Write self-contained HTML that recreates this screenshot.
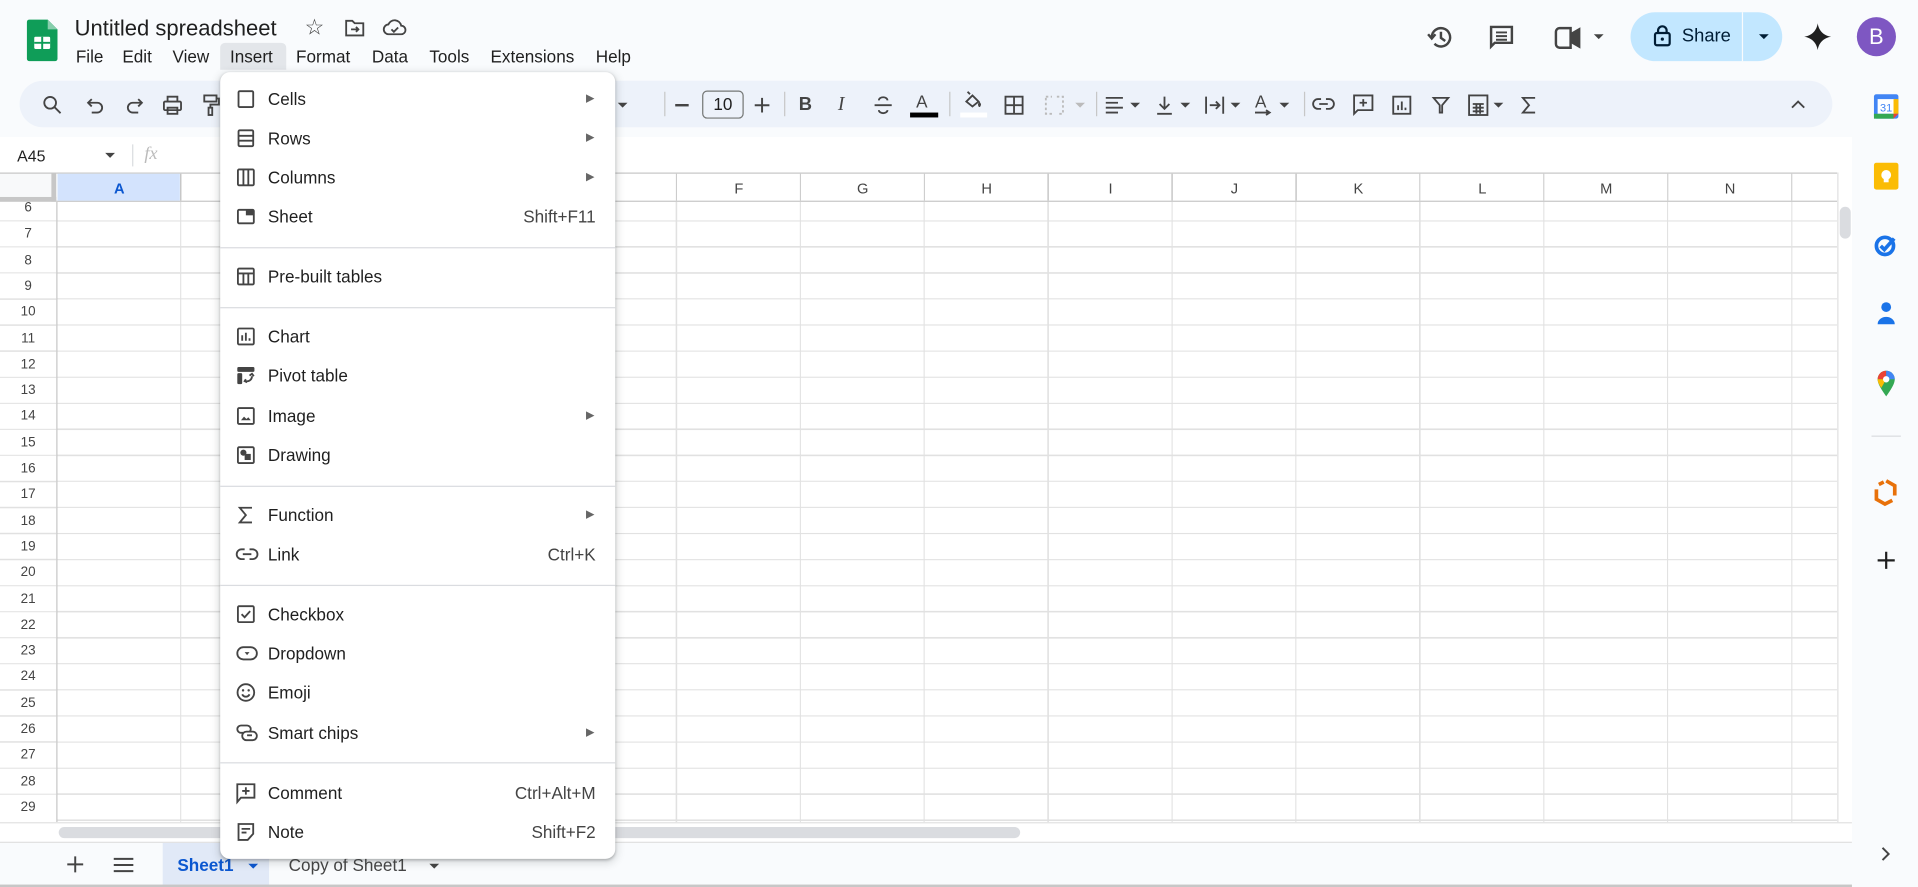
<!DOCTYPE html>
<html><head><meta charset="utf-8"><style>
*{box-sizing:border-box;margin:0;padding:0}
html,body{width:1918px;height:887px;overflow:hidden;background:#f9fbfd}
#w{position:absolute;left:0;top:0;width:1568px;height:725px;transform:scale(1.22321,1.22345);transform-origin:0 0;font-family:"Liberation Sans",Arial,sans-serif;color:#1f1f1f;background:#f9fbfd}
.a{position:absolute}
.t{position:absolute;white-space:nowrap}
svg{position:absolute;overflow:visible}
.mi{position:absolute;left:0;width:323px;height:32px}
.mi span.l{position:absolute;left:39px;top:8px;font-size:14px;color:#1f1f1f}
.mi span.r{position:absolute;right:16px;top:8px;font-size:14px;color:#444}
.mi span.ar{position:absolute;right:17px;top:10px;font-size:9px;color:#666}
.mi svg{left:13px;top:8px}
.sep{position:absolute;left:0;width:323px;height:1px;background:#dadce0}
.tb{stroke:#444;fill:none;stroke-width:1.5}
.car{position:absolute;width:0;height:0;border-left:4px solid transparent;border-right:4px solid transparent;border-top:4px solid #444}
.vs{position:absolute;width:1px;height:20px;background:#c7c7c7;top:75px}
</style></head><body><div id="w">

<svg style="left:22px;top:16px" width="25" height="34" viewBox="0 0 25 34"><path d="M2 0h15l8 8v24a2 2 0 0 1-2 2H2a2 2 0 0 1-2-2V2a2 2 0 0 1 2-2z" fill="#0f9d58"/><path d="M17 0v8h8z" fill="#87ceac"/><rect x="6" y="14" width="13" height="10" rx="1" fill="#fff"/><path d="M6 19h13M12.5 14v10" stroke="#0f9d58" stroke-width="1.6"/></svg>
<div class="t" style="left:61px;top:13px;font-size:18px;color:#1f1f1f">Untitled spreadsheet</div>
<div class="t" style="left:249px;top:12px;font-size:18px;color:#444">☆</div>
<svg style="left:282px;top:16px" width="16" height="14"><path d="M1 1h5l2 2h7v10H1z" class="tb"/><path d="M5 8h6M9 6l2 2-2 2" class="tb" stroke-width="1.3"/></svg>
<svg style="left:313px;top:15px" width="19" height="14"><path d="M5 13a4 4 0 0 1-.5-8A5.5 5.5 0 0 1 15 6a3.5 3.5 0 0 1 0 7z" class="tb"/><path d="M7 9l2 2 3.5-3.5" class="tb" stroke-width="1.3"/></svg>

<div class="a" style="left:180px;top:35px;width:54px;height:22px;background:#e3e6ea;border-radius:4px 4px 0 0"></div>
<div class="t" style="left:62px;top:38px;font-size:14px">File</div>
<div class="t" style="left:100px;top:38px;font-size:14px">Edit</div>
<div class="t" style="left:141px;top:38px;font-size:14px">View</div>
<div class="t" style="left:188px;top:38px;font-size:14px">Insert</div>
<div class="t" style="left:242px;top:38px;font-size:14px">Format</div>
<div class="t" style="left:304px;top:38px;font-size:14px">Data</div>
<div class="t" style="left:351px;top:38px;font-size:14px">Tools</div>
<div class="t" style="left:401px;top:38px;font-size:14px">Extensions</div>
<div class="t" style="left:487px;top:38px;font-size:14px">Help</div>

<svg style="left:1167px;top:20px" width="21" height="21"><path d="M3.5 10.5a7.5 7.5 0 1 1 2.2 5.3" stroke="#444" stroke-width="2" fill="none"/><path d="M0.5 8l3 3.5 3-3.5" stroke="#444" stroke-width="2" fill="none"/><path d="M11 6v5l3.5 2.5" stroke="#444" stroke-width="2" fill="none"/></svg>
<svg style="left:1217px;top:20px" width="21" height="21"><path d="M2 2h17v13H5l-3 3z" stroke="#444" stroke-width="2" fill="none"/><path d="M6 6.5h9M6 9.5h9M6 12.5h9" stroke="#444" stroke-width="1.6"/></svg>
<svg style="left:1270px;top:22px" width="26" height="18"><path d="M2 4a3 3 0 0 1 3-3h9v16H5a3 3 0 0 1-3-3z" stroke="#444" stroke-width="2" fill="none"/><path d="M14 6l7-4v14l-7-4" stroke="#444" stroke-width="2" fill="#444"/></svg>
<div class="car" style="left:1303px;top:28px"></div>
<div class="a" style="left:1333px;top:10px;width:124px;height:40px;border-radius:20px;background:#c2e7ff"></div>
<div class="a" style="left:1424px;top:10px;width:1px;height:40px;background:#f9fbfd"></div>
<svg style="left:1352px;top:20px" width="14" height="18"><rect x="1" y="7" width="12" height="10" rx="1.5" stroke="#001d35" stroke-width="1.8" fill="none"/><path d="M3.5 7V5a3.5 3.5 0 0 1 7 0v2" stroke="#001d35" stroke-width="1.8" fill="none"/><circle cx="7" cy="12" r="1.3" fill="#001d35"/></svg>
<div class="t" style="left:1375px;top:21px;font-size:15px;color:#001d35">Share</div>
<div class="car" style="left:1438px;top:28px;border-top-color:#001d35"></div>
<svg style="left:1475px;top:19px" width="22" height="22"><path d="M11 0C11.8 6 16 10.2 22 11 16 11.8 11.8 16 11 22 10.2 16 6 11.8 0 11 6 10.2 10.2 6 11 0z" fill="#1f1f1f"/></svg>
<div class="a" style="left:1518px;top:14px;width:32px;height:32px;border-radius:50%;background:#7e57c2;color:#fff;font-size:18px;text-align:center;line-height:32px">B</div>

<div class="a" style="left:16px;top:66px;width:1482px;height:38px;border-radius:19px;background:#edf2fa"></div>
<svg style="left:35px;top:78px" width="16" height="16"><circle cx="6" cy="6" r="4.8" class="tb" stroke-width="1.8"/><path d="M9.5 9.5l5 5" class="tb" stroke-width="1.8"/></svg>
<svg style="left:71px;top:79px" width="14" height="14"><path d="M1 5h7.5a4 4 0 0 1 0 8H4" class="tb"/><path d="M4 2L1 5l3 3" class="tb"/></svg>
<svg style="left:103px;top:79px" width="14" height="14"><path d="M13 5H5.5a4 4 0 0 0 0 8H10" class="tb"/><path d="M10 2l3 3-3 3" class="tb"/></svg>
<svg style="left:133px;top:78px" width="16" height="16"><rect x="1" y="5" width="14" height="7" rx="1" class="tb"/><path d="M4 5V1h8v4M4 10h8v5H4z" class="tb"/></svg>
<svg style="left:166px;top:77px" width="14" height="18"><rect x="1" y="1" width="10" height="5" class="tb"/><path d="M11 3.5h2v5H6v3" class="tb"/><rect x="4.5" y="11" width="3" height="6" class="tb"/></svg>
<div class="car" style="left:505px;top:84px"></div>
<div class="vs" style="left:543px"></div>
<div class="a" style="left:552px;top:85px;width:11px;height:1.6px;background:#444"></div>
<div class="a" style="left:574px;top:74px;width:34px;height:23px;border:1px solid #747775;border-radius:4px;font-size:14px;text-align:center;line-height:21px;color:#1f1f1f">10</div>
<svg style="left:617px;top:80px" width="12" height="12"><path d="M6 0v12M0 6h12" stroke="#444" stroke-width="1.6"/></svg>
<div class="vs" style="left:641px"></div>
<div class="t" style="left:653px;top:77px;font-size:15px;font-weight:bold;color:#444">B</div>
<div class="t" style="left:685px;top:77px;font-size:16px;font-style:italic;font-family:'Liberation Serif',serif;color:#444">I</div>
<svg style="left:714px;top:78px" width="16" height="16"><path d="M11.5 4a3.5 2.5 0 0 0-7 0M4.5 12a3.5 2.5 0 0 0 7 0M1 8h14" class="tb"/></svg>
<div class="t" style="left:749px;top:75px;font-size:14px;color:#444">A</div>
<div class="a" style="left:744px;top:92px;width:23px;height:4px;background:#000"></div>
<div class="vs" style="left:776px"></div>
<svg style="left:787px;top:74px" width="17" height="17"><path d="M3 9l5-5 5 5-5 4z" class="tb"/><path d="M6 3L4 1" class="tb"/><path d="M15 11c0 1.5-.8 2.5-1.3 2.5S12.5 12.5 12.5 11l1.2-2z" fill="#444"/></svg>
<div class="a" style="left:785px;top:92px;width:22px;height:4px;background:#fff"></div>
<svg style="left:821px;top:78px" width="16" height="16"><rect x="1" y="1" width="14" height="14" class="tb"/><path d="M8 1v14M1 8h14" class="tb"/></svg>
<svg style="left:854px;top:78px" width="16" height="16"><path d="M1 1h5M10 1h5v14h-5M6 15H1V1" stroke="#bbb" stroke-width="1.5" fill="none" stroke-dasharray="2 2"/></svg>
<div class="car" style="left:879px;top:84px;border-top-color:#bbb"></div>
<div class="vs" style="left:896px"></div>
<svg style="left:903px;top:79px" width="16" height="14"><path d="M1 1h14M1 5h10M1 9h14M1 13h10" class="tb"/></svg>
<div class="car" style="left:924px;top:84px"></div>
<svg style="left:945px;top:78px" width="14" height="16"><path d="M7 1v10M3 7l4 4 4-4M1 15h12" class="tb"/></svg>
<div class="car" style="left:965px;top:84px"></div>
<svg style="left:985px;top:78px" width="16" height="16"><path d="M1 1v14M15 1v14M4 8h8M9 5l3 3-3 3" class="tb"/></svg>
<div class="car" style="left:1006px;top:84px"></div>
<div class="t" style="left:1026px;top:75px;font-size:14px;color:#444">A</div>
<svg style="left:1025px;top:90px" width="16" height="6"><path d="M1 2h12M10 0l3 2-3 2" class="tb" stroke-width="1.3"/></svg>
<div class="car" style="left:1046px;top:84px"></div>
<div class="vs" style="left:1066px"></div>
<svg style="left:1073px;top:80px" width="18" height="10"><path d="M7 1H4.5a4 4 0 0 0 0 8H7M11 1h2.5a4 4 0 0 1 0 8H11M5.5 5h7" class="tb" stroke-width="1.8"/></svg>
<svg style="left:1106px;top:77px" width="17" height="18"><path d="M1 1h15v12H4l-3 3z" class="tb"/><path d="M8.5 4v6M5.5 7h6" class="tb"/></svg>
<svg style="left:1138px;top:78px" width="16" height="16"><rect x="1" y="1" width="14" height="14" class="tb"/><path d="M5 12V8M8 12V5M11 12v-2" class="tb"/></svg>
<svg style="left:1171px;top:79px" width="14" height="14"><path d="M1 1h12L8 7v6H6V7z" class="tb"/></svg>
<svg style="left:1200px;top:77px" width="17" height="18"><rect x="1" y="1" width="15" height="16" class="tb"/><path d="M4 8h9M4 11h9M4 14h9M7 8v8M10 8v8" class="tb" stroke-width="1.2"/></svg>
<div class="car" style="left:1221px;top:84px"></div>
<svg style="left:1244px;top:79px" width="12" height="14"><path d="M11 1H1l5 6-5 6h10" class="tb" stroke-width="1.8"/></svg>
<svg style="left:1464px;top:81px" width="12" height="8"><path d="M1 7l5-5 5 5" class="tb" stroke-width="1.8"/></svg>

<div class="a" style="left:0;top:112px;width:1514px;height:29px;background:#fff"></div>
<div class="t" style="left:14px;top:120px;font-size:13px;color:#1f1f1f">A45</div>
<div class="car" style="left:86px;top:125px"></div>
<div class="a" style="left:108px;top:118px;width:1px;height:18px;background:#dadce0"></div>
<div class="t" style="left:118px;top:118px;font-size:15px;font-style:italic;font-family:'Liberation Serif',serif;color:#bbb">fx</div>

<div class="a" style="left:0;top:141px;width:1502px;height:531px;background-color:#fff;background-image:repeating-linear-gradient(to right,transparent 0,transparent 100.3px,#e1e1e1 100.3px,#e1e1e1 101.3px),repeating-linear-gradient(to bottom,transparent 0,transparent 20.3px,#e1e1e1 20.3px,#e1e1e1 21.3px);background-position:47px 18.7px"></div>
<div class="a" style="left:0;top:141px;width:1502px;height:24px;background-color:#fff;border-top:1px solid #c7c7c7;border-bottom:1px solid #c7c7c7;background-image:repeating-linear-gradient(to right,transparent 0,transparent 100.3px,#c7c7c7 100.3px,#c7c7c7 101.3px);background-position:47px 0"></div>
<div class="a" style="left:47px;top:142px;width:100px;height:22px;background:#d3e3fd"></div>
<div class="a" style="left:0;top:141px;width:46px;height:24px;background:#f8f9fa;border-right:4px solid #c7c7c7;border-bottom:4px solid #c7c7c7;border-top:1px solid #c7c7c7"></div>
<div class="a" style="left:0;top:165px;width:47px;height:507px;background:#fff;border-right:1px solid #c7c7c7;background-image:repeating-linear-gradient(to bottom,transparent 0,transparent 20.3px,#e1e1e1 20.3px,#e1e1e1 21.3px);background-position:0 -5.3px"></div>
<div id="cols"></div>
<div class="a" style="left:1502px;top:141px;width:12px;height:547px;background:#fff;border-left:1px solid #e1e1e1"></div>
<div class="a" style="left:1504px;top:169px;width:9px;height:26px;border-radius:5px;background:#dadce0"></div>
<div class="a" style="left:0;top:672px;width:1514px;height:16px;background:#fff;border-top:1px solid #e1e1e1"></div>
<div class="a" style="left:48px;top:676px;width:786px;height:9px;border-radius:5px;background:#dadce0"></div>

<div class="a" style="left:0;top:688px;width:1514px;height:37px;background:#f9fbfd;border-top:1px solid #e1e1e1"></div>
<svg style="left:55px;top:700px" width="13" height="13"><path d="M6.5 0v13M0 6.5h13" stroke="#444" stroke-width="1.6"/></svg>
<svg style="left:93px;top:701px" width="16" height="12"><path d="M0 1h16M0 6h16M0 11h16" stroke="#444" stroke-width="1.6"/></svg>
<div class="a" style="left:133px;top:689px;width:87px;height:36px;background:#e1e9f7"></div>
<div class="t" style="left:145px;top:699px;font-size:14px;font-weight:bold;color:#0b57d0">Sheet1</div>
<div class="car" style="left:203px;top:706px;border-top-color:#0b57d0"></div>
<div class="t" style="left:236px;top:699px;font-size:14px;color:#444">Copy of Sheet1</div>
<div class="car" style="left:351px;top:706px"></div>
<div class="a" style="left:0;top:723px;width:1568px;height:2px;background:#c7c7c7"></div>

<div class="a" style="left:1514px;top:60px;width:54px;height:665px;background:#f9fbfd"></div>
<svg style="left:1532px;top:77px" width="20" height="20"><rect x="0" y="0" width="20" height="20" rx="2" fill="#4285f4"/><rect x="3" y="4" width="14" height="12" fill="#fff"/><rect x="0" y="16" width="16" height="4" fill="#34a853"/><rect x="16" y="4" width="4" height="12" fill="#fbbc04"/><path d="M16 16h4l-4 4z" fill="#ea4335"/><text x="10" y="14" font-size="9" text-anchor="middle" fill="#4285f4" font-family="Liberation Sans">31</text></svg>
<svg style="left:1532px;top:133px" width="20" height="22"><rect width="20" height="22" rx="2" fill="#fbbc04"/><circle cx="10" cy="10" r="4" fill="#fff"/><rect x="8" y="13" width="4" height="3" fill="#fff"/></svg>
<svg style="left:1532px;top:190px" width="20" height="20"><circle cx="9" cy="11" r="7" stroke="#1a73e8" stroke-width="3" fill="none"/><path d="M5.5 11l3 3 8-9" stroke="#1a73e8" stroke-width="3" fill="none"/></svg>
<svg style="left:1534px;top:246px" width="16" height="20"><circle cx="8" cy="5" r="4" fill="#1a73e8"/><path d="M1 19a7 6 0 0 1 14 0z" fill="#1a73e8"/></svg>
<svg style="left:1534px;top:302px" width="16" height="22"><path d="M8 22C3 15 1 11 1 8a7 7 0 0 1 14 0c0 3-2 7-7 14z" fill="#34a853"/><path d="M1 8a7 7 0 0 1 7-7l0 7z" fill="#ea4335"/><path d="M8 1a7 7 0 0 1 7 7H8z" fill="#4285f4"/><path d="M1 8h7l-4 7C2 12 1 10 1 8z" fill="#fbbc04"/><circle cx="8" cy="8" r="2.6" fill="#fff"/></svg>
<div class="a" style="left:1530px;top:356px;width:24px;height:1px;background:#dadce0"></div>
<svg style="left:1533px;top:392px" width="17" height="20"><path d="M9 1l7 4v8M14 17l-6 3-7-4V8M3 4l4-2" stroke="#e8710a" stroke-width="3" fill="none"/></svg>
<svg style="left:1535px;top:451px" width="14" height="14"><path d="M7 0v14M0 7h14" stroke="#1f1f1f" stroke-width="1.8"/></svg>
<svg style="left:1538px;top:692px" width="8" height="12"><path d="M1 1l5 5-5 5" stroke="#444" stroke-width="1.6" fill="none"/></svg>

<div class="a" style="left:180px;top:59px;width:323px;height:643px;background:#fff;border-radius:8px;box-shadow:0 2px 6px 2px rgba(60,64,67,.15),0 1px 2px rgba(60,64,67,.3)">
 <div class="mi" style="top:6px"><svg width="16" height="16"><rect x="2" y="1.5" width="12" height="13" rx="1" class="tb"/></svg><span class="l">Cells</span><span class="ar">▶</span></div>
 <div class="mi" style="top:38px"><svg width="16" height="16"><rect x="2" y="1.5" width="12" height="13" rx="1" class="tb"/><path d="M2 6h12M2 10h12" class="tb"/></svg><span class="l">Rows</span><span class="ar">▶</span></div>
 <div class="mi" style="top:70px"><svg width="16" height="16"><rect x="1.5" y="1.5" width="13" height="13" rx="1" class="tb"/><path d="M6 1.5v13M10 1.5v13" class="tb"/></svg><span class="l">Columns</span><span class="ar">▶</span></div>
 <div class="mi" style="top:102px"><svg width="16" height="16"><rect x="1.5" y="2.5" width="13" height="11" rx="1" class="tb"/><rect x="8" y="2.5" width="6.5" height="4.5" fill="#444"/></svg><span class="l">Sheet</span><span class="r">Shift+F11</span></div>
 <div class="sep" style="top:143px"></div>
 <div class="mi" style="top:151px"><svg width="16" height="16"><rect x="1.5" y="1.5" width="13" height="13" rx="1" class="tb"/><path d="M1.5 5.5h13M6 5.5v9M10 5.5v9" class="tb"/></svg><span class="l">Pre-built tables</span></div>
 <div class="sep" style="top:192px"></div>
 <div class="mi" style="top:200px"><svg width="16" height="16"><rect x="1.5" y="1.5" width="13" height="13" rx="1" class="tb"/><path d="M5 11.5V7M8 11.5V5M11 11.5v-2" class="tb"/></svg><span class="l">Chart</span></div>
 <div class="mi" style="top:232px"><svg width="16" height="16"><rect x="1" y="1" width="14" height="4" rx="1" fill="#444"/><rect x="1" y="6" width="4" height="9" rx="1" fill="#444"/><path d="M8 12.5a4 4 0 0 0 5-4M11 8l2-1.5 1.5 2M8 11l-1 1.5 2 1" class="tb" stroke-width="1.3"/></svg><span class="l">Pivot table</span></div>
 <div class="mi" style="top:265px"><svg width="16" height="16"><rect x="1.5" y="1.5" width="13" height="13" rx="1" class="tb"/><path d="M4 11.5l2.5-3 2 2 1.5-1.5 2 2.5z" fill="#444"/></svg><span class="l">Image</span><span class="ar">▶</span></div>
 <div class="mi" style="top:297px"><svg width="16" height="16"><rect x="1.5" y="1.5" width="13" height="13" rx="1" class="tb"/><circle cx="6" cy="6" r="2.5" fill="#444"/><rect x="7" y="7" width="5" height="5" fill="#444"/></svg><span class="l">Drawing</span></div>
 <div class="sep" style="top:338px"></div>
 <div class="mi" style="top:346px"><svg width="16" height="16"><path d="M13 2H3l5 6-5 6h10" class="tb" stroke-width="1.8"/></svg><span class="l">Function</span><span class="ar">▶</span></div>
 <div class="mi" style="top:378px"><svg width="18" height="16"><path d="M7 4H4.5a4 4 0 0 0 0 8H7M11 4h2.5a4 4 0 0 1 0 8H11M5.5 8h7" class="tb" stroke-width="1.6"/></svg><span class="l">Link</span><span class="r">Ctrl+K</span></div>
 <div class="sep" style="top:419px"></div>
 <div class="mi" style="top:427px"><svg width="16" height="16"><rect x="1.5" y="1.5" width="13" height="13" rx="1" class="tb"/><path d="M4.5 8l2.5 2.5 4.5-5" class="tb"/></svg><span class="l">Checkbox</span></div>
 <div class="mi" style="top:459px"><svg width="18" height="16"><rect x="1" y="3" width="16" height="10" rx="5" class="tb"/><path d="M7 7h4l-2 2.5z" fill="#444"/></svg><span class="l">Dropdown</span></div>
 <div class="mi" style="top:491px"><svg width="16" height="16"><circle cx="8" cy="8" r="6.8" class="tb"/><circle cx="5.7" cy="6.3" r="1" fill="#444"/><circle cx="10.3" cy="6.3" r="1" fill="#444"/><path d="M5 9.5a3.3 3.3 0 0 0 6 0" class="tb" stroke-width="1.4"/></svg><span class="l">Emoji</span></div>
 <div class="mi" style="top:524px"><svg width="18" height="16"><rect x="1" y="2" width="11" height="6" rx="3" class="tb"/><rect x="5" y="7" width="12" height="7" rx="3.5" fill="#fff" stroke="#444" stroke-width="1.5"/><path d="M9 10h4" class="tb"/></svg><span class="l">Smart chips</span><span class="ar">▶</span></div>
 <div class="sep" style="top:564px"></div>
 <div class="mi" style="top:573px"><svg width="16" height="17"><path d="M1 1h14v11H4l-3 3.5z" class="tb"/><path d="M8 3.5v6M5 6.5h6" class="tb"/></svg><span class="l">Comment</span><span class="r">Ctrl+Alt+M</span></div>
 <div class="mi" style="top:605px"><svg width="16" height="16"><path d="M2 1.5h12v8l-4.5 5H2z" class="tb"/><path d="M4.5 5.5h7M4.5 8.5h4" class="tb"/></svg><span class="l">Note</span><span class="r">Shift+F2</span></div>
</div>

<script>
var c=document.getElementById('cols'),h='';
var L='ABCDEFGHIJKLMN';
for(var i=0;i<14;i++){if(i>0&&i<5)continue;var x=47+i*101.3;h+='<div class="t" style="left:'+x+'px;top:147px;width:101px;text-align:center;font-size:12px;color:'+(i==0?'#0b57d0':'#444')+';font-weight:'+(i==0?'bold':'normal')+'">'+L[i]+'</div>';}
for(var r=6;r<=29;r++){var y=170+(r-6)*21.3-6;if(r==6)y=164;h+='<div class="t" style="left:0;top:'+y+'px;width:46px;text-align:center;font-size:11px;color:#444">'+r+'</div>';}
c.innerHTML=h;
</script>
</div></body></html>
